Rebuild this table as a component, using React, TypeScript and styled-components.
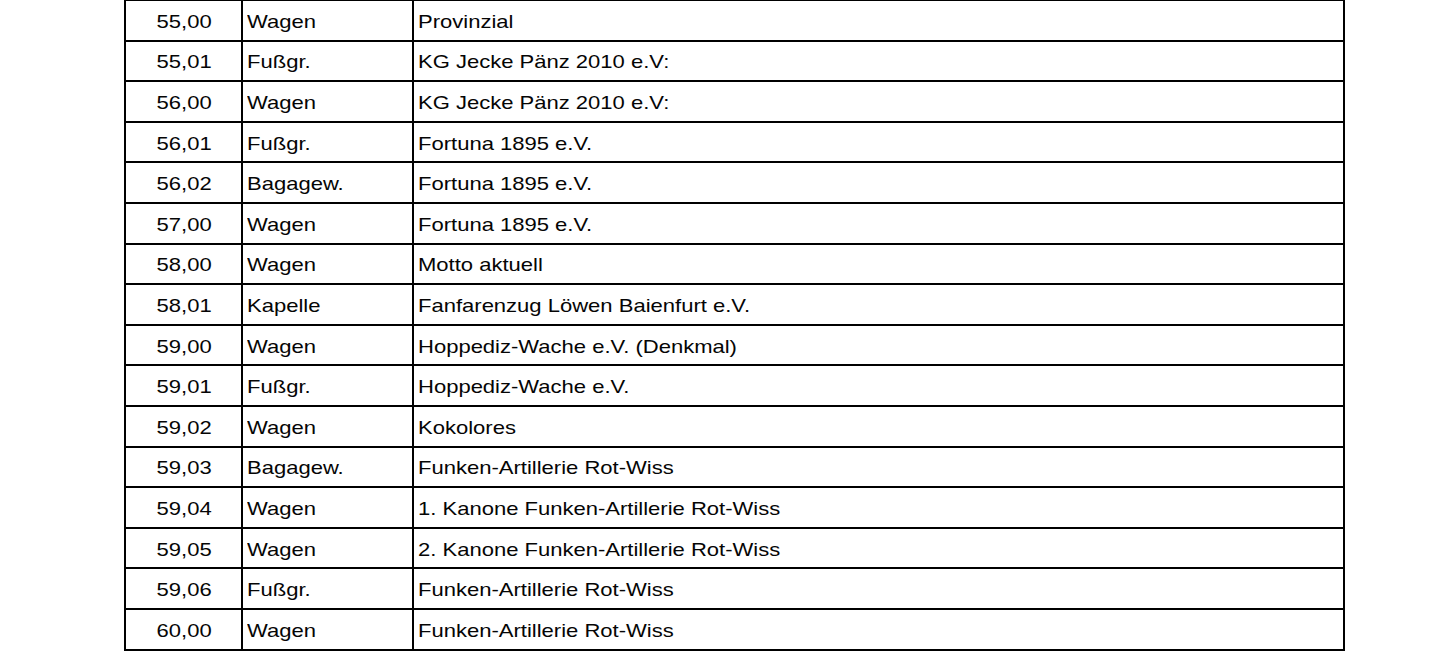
import React from 'react';
import styled, { createGlobalStyle } from 'styled-components';

const GlobalStyles = createGlobalStyle`
  html, body {
    margin: 0;
    padding: 0;
    background: #ffffff;
    overflow: hidden;
  }
`;

const Page = styled.main`
  width: 1447px;
  height: 651px;
  overflow: hidden;
  background: #ffffff;
  padding-left: 124px;
  box-sizing: border-box;
`;

const Grid = styled.div`
  display: grid;
  grid-template-columns: 117px 171px 931px;
  grid-auto-rows: 40.6px;
  width: max-content;
  border-left: 2px solid #000;
  border-top: 1px solid #000;
  font-family: 'Liberation Sans', Arial, sans-serif;
  font-size: 18.5px;
  color: #050505;
`;

const Cell = styled.div<{ $align?: 'center' | 'left' }>`
  display: flex;
  align-items: center;
  justify-content: ${(p) => (p.$align === 'center' ? 'center' : 'flex-start')};
  padding: 3px 0 0 ${(p) => (p.$align === 'center' ? '2px' : '4px')};
  border-right: 2px solid #000;
  border-bottom: 2px solid #000;
  box-sizing: border-box;
  overflow: hidden;
`;

const Label = styled.span<{ $origin?: string }>`
  display: inline-block;
  white-space: nowrap;
  transform: scaleX(1.19);
  transform-origin: ${(p) => p.$origin ?? 'left center'};
`;

const rows: [string, string, string][] = [
  ['55,00', 'Wagen', 'Provinzial'],
  ['55,01', 'Fußgr.', 'KG Jecke Pänz 2010 e.V:'],
  ['56,00', 'Wagen', 'KG Jecke Pänz 2010 e.V:'],
  ['56,01', 'Fußgr.', 'Fortuna 1895 e.V.'],
  ['56,02', 'Bagagew.', 'Fortuna 1895 e.V.'],
  ['57,00', 'Wagen', 'Fortuna 1895 e.V.'],
  ['58,00', 'Wagen', 'Motto aktuell'],
  ['58,01', 'Kapelle', 'Fanfarenzug Löwen Baienfurt e.V.'],
  ['59,00', 'Wagen', 'Hoppediz-Wache e.V. (Denkmal)'],
  ['59,01', 'Fußgr.', 'Hoppediz-Wache e.V.'],
  ['59,02', 'Wagen', 'Kokolores'],
  ['59,03', 'Bagagew.', 'Funken-Artillerie Rot-Wiss'],
  ['59,04', 'Wagen', '1. Kanone Funken-Artillerie Rot-Wiss'],
  ['59,05', 'Wagen', '2. Kanone Funken-Artillerie Rot-Wiss'],
  ['59,06', 'Fußgr.', 'Funken-Artillerie Rot-Wiss'],
  ['60,00', 'Wagen', 'Funken-Artillerie Rot-Wiss'],
];

const App = () => {
  return (
    <>
      <GlobalStyles />
      <Page>
        <Grid>
          {rows.map(([nr, kind, name]) => (
            <React.Fragment key={nr}>
              <Cell $align="center">
                <Label $origin="center center">{nr}</Label>
              </Cell>
              <Cell>
                <Label>{kind}</Label>
              </Cell>
              <Cell>
                <Label>{name}</Label>
              </Cell>
            </React.Fragment>
          ))}
        </Grid>
      </Page>
    </>
  );
};

export default App;
